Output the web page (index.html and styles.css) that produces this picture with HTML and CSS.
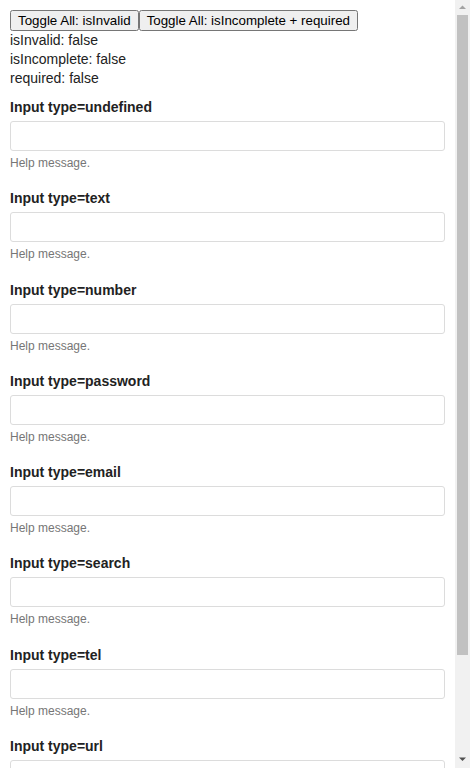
FILE: index.html
```html
<!DOCTYPE html>
<html>
<head>
<meta charset="utf-8">
<link rel="stylesheet" href="styles.css">
</head>
<body>
<div class="toolbar"><button class="btn">Toggle All: isInvalid</button><button class="btn">Toggle All: isIncomplete + required</button></div>
<div class="state">isInvalid: false</div>
<div class="state">isIncomplete: false</div>
<div class="state">required: false</div>
<div class="field"><label class="label">Input type=undefined</label><input class="input"><div class="help">Help message.</div></div>
<div class="field"><label class="label">Input type=text</label><input class="input" type="text"><div class="help">Help message.</div></div>
<div class="field"><label class="label">Input type=number</label><input class="input" type="number"><div class="help">Help message.</div></div>
<div class="field"><label class="label">Input type=password</label><input class="input" type="password"><div class="help">Help message.</div></div>
<div class="field"><label class="label">Input type=email</label><input class="input" type="email"><div class="help">Help message.</div></div>
<div class="field"><label class="label">Input type=search</label><input class="input" type="search"><div class="help">Help message.</div></div>
<div class="field"><label class="label">Input type=tel</label><input class="input" type="tel"><div class="help">Help message.</div></div>
<div class="field"><label class="label">Input type=url</label><input class="input" type="url"><div class="help">Help message.</div></div>
<div class="scrollbar">
  <svg class="arrow" width="15" height="15" viewBox="0 0 15 15"><polygon points="4,9 11,9 7.5,5.5" fill="#a3a3a3"/></svg>
  <div class="track"><div class="thumb"></div></div>
  <svg class="arrow" width="15" height="15" viewBox="0 0 15 15"><polygon points="4,4.5 11,4.5 7.5,8" fill="#505050"/></svg>
</div>
</body>
</html>
```
FILE: styles.css
```css
html { overflow-y: auto; }
body {
  margin: 0 15px 0 0;
  padding: 10px;
  font-family: "Liberation Sans", Arial, sans-serif;
  font-size: 14px;
  color: #222;
}
.toolbar { display: flex; }
.btn {
  font-family: "Liberation Sans", Arial, sans-serif;
  font-size: 13.333px;
  margin: 0;
}
.state { line-height: 19px; }
.field {
  display: flex;
  flex-direction: column;
  padding: 10px 0 8.3px;
}
.label {
  font-weight: bold;
  line-height: 19px;
  margin-bottom: 4px;
  color: #222;
}
.input {
  box-sizing: border-box;
  height: 30px;
  width: 100%;
  margin: 0;
  border: 1px solid #dcdcdc;
  border-radius: 3px;
  background: #fff;
  font-family: "Liberation Sans", Arial, sans-serif;
  font-size: 14px;
  padding: 0 8px;
  outline: none;
  -webkit-appearance: none;
  appearance: none;
}
.help {
  margin-top: 4px;
  font-size: 12px;
  line-height: 16px;
  color: #767676;
}
.scrollbar {
  position: fixed;
  top: 0;
  right: 0;
  width: 15px;
  height: 100vh;
  background: #f1f1f1;
  display: flex;
  flex-direction: column;
}
.arrow { display: block; flex: none; }
.track {
  flex: 1;
  padding: 0 2px;
}
.thumb {
  height: 640px;
  background: #c1c1c1;
}
```
